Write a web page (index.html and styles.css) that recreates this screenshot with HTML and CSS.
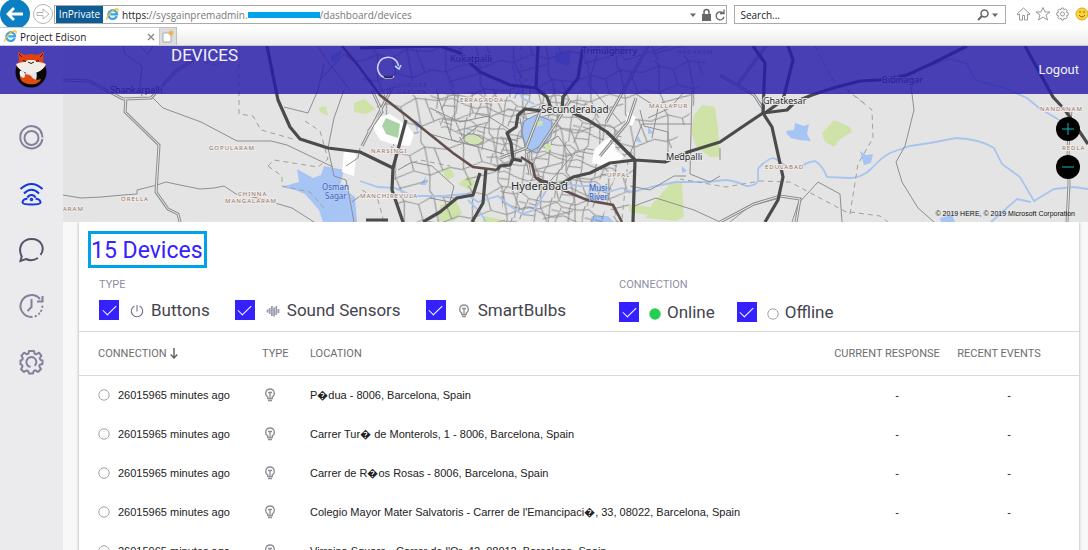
FILE: index.html
```html
<!DOCTYPE html>
<html lang="en">
<head>
<meta charset="utf-8">
<title>Project Edison</title>
<link rel="stylesheet" href="styles.css">
</head>
<body>
<svg class="defs" aria-hidden="true">
  <symbol id="ie" viewBox="0 0 14 14">
    <path d="M11.6 8.8a4.7 4.7 0 1 1 .3-2H4.6" fill="none" stroke="#35a3e6" stroke-width="2.4"/>
    <path d="M1.2 12.8C-.4 10.600 5.500 2.200 11 1c2.600-.5 2.500 1.500 1.600 3" fill="none" stroke="#efbb2b" stroke-width="1.3"/>
  </symbol>
  <symbol id="bulb" viewBox="0 0 12 14">
    <path d="M3.700 8.800C.7 7.400.9 1 6 1s5.300 6.400 2.300 7.800V10.500H3.700zM4 12.500h4M4 4.500h4M6 4.500v5" fill="none" stroke="#8d8d94" stroke-width="1.300"/>
  </symbol>
  <symbol id="ring" viewBox="0 0 12 12"><circle cx="6" cy="6" r="5.200" fill="#fff" stroke="#a3a3a6"/></symbol>
</svg>

<header class="browser">
  <div class="toolbar">
    <button class="back" aria-label="Back"><svg viewBox="0 0 30 30"><circle cx="15" cy="14" r="15" fill="#0b7fc1"/><path d="M23 14H9M14 8l-6 6 6 6" fill="none" stroke="#fff" stroke-width="2.800"/></svg></button>
    <button class="forward" aria-label="Forward"><svg viewBox="0 0 22 22"><circle cx="11" cy="11" r="9.500" fill="#fff" stroke="#b5b5b5"/><path d="M5 9.500h6V6l6 5-6 5v-3.500H5z" fill="#fff" stroke="#b5b5b5"/></svg></button>
    <div class="address">
      <span class="inprivate">InPrivate</span>
      <svg class="ie"><use href="#ie"/></svg>
      <span class="url"><b>https:</b>//sysgainpremadmin.</span><span class="stroke"></span><span class="url">/dashboard/devices</span>
      <svg class="addr-tools" viewBox="0 0 36 14"><path d="M0 5.500h6l-3 3.500z" fill="#666"/><path d="M12 6h9v7h-9z" fill="#666"/><path d="M14 6V4a2.500 2.500 0 0 1 5 0v2" fill="none" stroke="#666" stroke-width="1.500"/><path d="M33 5a4 4 0 1 0 1 4M34 1.500V5.500h-4" fill="none" stroke="#666" stroke-width="1.300"/></svg>
    </div>
    <form class="search">
      <input type="text" aria-label="Search" placeholder="Search...">
      <svg viewBox="0 0 24 14"><circle cx="7.500" cy="5.500" r="3.500" fill="none" stroke="#666" stroke-width="1.500"/><path d="M5 8l-4 4" stroke="#666" stroke-width="2"/><path d="M15 5.500h6l-3 3.500z" fill="#666"/></svg>
    </form>
    <svg class="tools" viewBox="0 0 72 16" fill="none" stroke="#999">
      <path d="M1 8l6.500-6L14 8l-1 1-1.500-1v6h-3V9.500h-2V14h-3V8L2 9z"/>
      <path d="M27 1.500l2 4.500h5l-4 3 1.500 5-4.500-3-4.500 3L24 9l-4-3h5z"/>
      <g><circle cx="46.500" cy="8" r="2"/><path d="M45.500 2h2l.5 1.800 1.800-.8 1.400 1.400-.8 1.800 1.800.6v2.400l-1.800.6.8 1.800-1.400 1.400-1.800-.8-.5 1.800h-2l-.5-1.800-1.800.8-1.400-1.400.8-1.800-1.800-.6V6.800l1.800-.6-.8-1.800L43.200 3l1.800.8z"/></g>
      <circle cx="66" cy="8" r="6" fill="#fbd43a" stroke="#dba91b"/><path d="M63 9q3 4 6 0M64 5v2M68 5v2" stroke="#8a6410"/>
    </svg>
  </div>
  <div class="tabs">
    <div class="tab"><svg class="ie"><use href="#ie"/></svg><span>Project Edison</span><button aria-label="Close tab"><svg viewBox="0 0 8 8"><path d="M1 1l6 6M7 1L1 7" stroke="#888" stroke-width="1.400"/></svg></button></div>
    <button class="newtab" aria-label="New tab"><svg viewBox="0 0 14 14"><path d="M2 3h8v9H2z" fill="#fff" stroke="#aaa"/><path d="M10 0v6M7 3h6M8 1l4 4M12 1L8 5" stroke="#f0ac3a"/></svg></button>
  </div>
</header>

<div class="app">
  <div class="topbar">
    <svg class="logo" viewBox="0 0 34 38">
      <circle cx="17" cy="22" r="15.500" fill="#080808"/>
      <path d="M12 30c-2-6 0-12 5-12s7 6 5 12z" fill="#e4e4e4"/>
      <path d="M6 24c-1 6 3 9 8 10 7 1 12-1 13-5-5 2-8 0-10-3-4-3-8 0-11-2z" fill="#df4a10"/>
      <path d="M6 21c3-1 7 2 4 7-4-1-5-4-4-7z" fill="#f2f2f2"/>
      <path d="M4 2l7 3q6-2 12 0l7-3-1 9 3 5q-7 7-15 7T2 16l3-5z" fill="#de4210"/>
      <path d="M2 14q5-2 8-2l4-2h6l4 2q3 0 8 2-3 6-8 8l-7 2-7-2Q5 20 2 14z" fill="#f1eeea"/>
      <path d="M5 4l3 3M29 4l-3 3M9 10.500l3 1M25 10.500l-3 1M14 12q3 3 6 0" stroke="#30140c" fill="none"/>
    </svg>
    <h1>DEVICES</h1>
    <svg class="spinner" viewBox="0 0 26 24" fill="none"><path d="M18 20.500A10.500 10.500 0 1 1 22.500 10" stroke="#d6d3ef" stroke-width="1.600"/><path d="M8 20.500q4.500 2.200 9 0" stroke="#26244a" stroke-width="1.500"/><path d="M19 10l4 3 2-4" stroke="#a8dcf4" stroke-width="1.600"/></svg>
    <a class="logout" href="#logout">Logout</a>
  </div>

  <nav class="sidebar">
    <a href="#status" aria-label="Status"><svg viewBox="0 0 24 24"><circle cx="12" cy="12" r="7"/><path d="M22.500 7.500a11.200 11.200 0 1 0 .5 5.500M21 5.500q2 3 2 6"/></svg></a>
    <a class="active" href="#devices" aria-label="Devices"><svg viewBox="0 0 24 24"><path d="M1 7Q12-3 23 7M4.500 11.500q7.500-7.500 15 0M8 15.500a4.500 4.500 0 0 1 8 0M8 16.500c-3 .5-5 2-5 4 0 1.500 3 2 9 2s9-.5 9-2c0-2-2-3.500-5-4"/><circle cx="12" cy="17.500" r=".8"/></svg></a>
    <a class="dark" href="#messages" aria-label="Messages"><svg viewBox="0 0 24 24"><path d="M2 18C-2 9 3 1 12 1c10 0 14 9 9 16M18.500 20c-4 2.500-9 2.500-12 1l-5.500 2 1.500-5.500"/></svg></a>
    <a href="#history" aria-label="History"><svg viewBox="0 0 24 24"><path d="M20.500 5A11 11 0 1 0 13 23M23 2v5.500h-5.500M12 5v8l-4 4"/><path d="M16 22.200l.5-.2M19.500 19.800l.3-.3M21.500 17l.3-.4M22.800 13v-.4" stroke-linecap="round"/></svg></a>
    <a href="#settings" aria-label="Settings"><svg viewBox="0 0 24 24"><path d="M9.500 1h5l.6 2.800q1 .8 2 .3l2.400-1.400 2.300 3-1.500 2.600q.2 1.400 1 1.700l1.700.5v3.500l-2.700.7q-.8.900-.3 2l1.500 2.400-3 2.800-2.600-1.600q-1.300.1-1.800 1l-.6 2.200h-4l-.6-2.200q-.8-.9-1.900-.9L4.500 22l-3-2.800L3 16.600q.1-1.300-.8-1.800L1 14.400v-4l1.500-.5q1-.7.7-1.900L1.900 5.600l2.700-2.900L7 4.100q1.300.2 1.900-.7z" stroke-linejoin="round"/><path d="M11 17a5 5 0 1 1 4.200-1.200"/></svg></a>
  </nav>

  <main class="content">
    <section class="map" aria-label="Map">
      <svg class="tiles" viewBox="63 46 1025 176" preserveAspectRatio="xMidYMid slice">
        <defs>
          <pattern id="streets" width="46" height="38" patternUnits="userSpaceOnUse" patternTransform="scale(1.5 1.3) rotate(-9)">
            <path d="M0 8l12-3 9 4 11-5 14 4M0 22l8 3 14-4 10 5 14-4M12 5l-3 19 3 14M21 9l1 12M32 4v22l-2 12M38 5l3 18M12 5L10 0M32 4l-2-4M9 33l21-3" fill="none" stroke="#909090" stroke-width=".7"/>
          </pattern>
          <pattern id="dense" width="34" height="29" patternUnits="userSpaceOnUse" patternTransform="rotate(14)">
            <path d="M0 6l10-3 8 4 16-1M0 18l12 1 9-4 13 3M5 5l3 24M17 7l-4 22M25 6l3 23M8 12h7M18 11l9 1M13 24l14-2M5 5l1-5M25 6l2-6" fill="none" stroke="#8a8a8a" stroke-width=".9"/>
          </pattern>
        </defs>
        <rect x="63" y="46" width="1025" height="176" fill="#e4e4e4"/>
        <g fill="#cfe3a9">
          <path d="M354 103l10-4 12 10-10 5-12-2zM694 115l8-10 13 2 3 20 2 30-10 0-14-11-5-14zM682 181l2 36-8 4-30-3 6-14 18-20zM822 133l12-13 16 7 2 5-12 7-6 8-9-5zM441 170l9-2 5 8-7 4zM440 205l16-4 6 12-8 8h-16zM318 108l8-2 2 10-8-4zM458 184l10-8 8 6-6 8zM484 216l20 4v2h-22zM628 204l22 3-2 8-18-3z"/>
        </g>
        <g fill="#a6c4f4">
          <path d="M281 187l18-5-2-13 16 9 8-3 3-9 20 4-4 16 7 5 8 6 2 25h-34l-4-12-14-16-10-4zM786 131l8-1 1-7 9 3 5-2-2 10 4 7-12-1-8-2-4-4zM860 151l6 4 7-1-2 9-7 2zM420 185l6-9-1 8 3-5-2 6zM414 120l6 2-3 10zM466 131l5 2-2 6zM648 127l6 6-6 1zM638 136l4 7-6-2zM682 166l5 5-5 2zM555 52h16l-2 14-14-4zM330 55l12-4-2 6-8 6zM592 216l16 0 6 6h-24zM940 218l12-3 3 7h-14z"/>
        </g>
        <path d="M430 94l140-6 52 46-6 40-14 48H504l-6-50-22-28-34-14z" fill="url(#dense)"/>
        <path d="M345 46h365l-16 60-22 42-36 12-10 62H400l-8-54-4-40z" fill="url(#streets)"/>
        <path d="M374 118l16-4 18 12 6 8-4 12-18-2-12-4-6-10zM594 150l10-10 9-3 3 14 8 5-7 8-11 2-14-3zM344 150l12 4-2 22-12-4zM628 112l8 5-4 9-7-3z" fill="#fdfdfd"/>
        <path d="M386 118l14 6-2 14-12-4-4-8z" fill="#a9d3a5"/>
        <path d="M464 136q10-6 20 4-8 10-20 1z" fill="#d1e2b4" stroke="#8a8a8a"/>
        <path d="M524 121l12-6 16 6-1 16-7 8-7 8-9-4-7-14z" fill="#a6c4f4" stroke="#7c93b9"/>
        <path d="M537 121h6l-1 5-3-1-2 3zM545 145l6-3v8l-6 1z" fill="#cfe3a9"/>
        <g fill="none" stroke="#a9c4ee" stroke-width="1.800">
          <path d="M360 181l18 6 16 1 20 8 30 0 22-2 12 8 20-6 12 10 12 8 12-4 14-22 18-4 14 2 14 0 14 6 14-4 10 4 24-6 20-4 30 0 20-2q10 1 20 6 10 0 12-5l0-12q7-9 15-11 8 3 15 10l10 1q8-7 17-8 8 5 12 16l23 1q12 0 22-10 10-11 18-15l20-7 20-3 26-5q24 1 38 10l8 16 18 13 14 24 20-12 20-2 14 2 14 12"/>
          <path d="M933 64l18-5 16 5 8 16 30 8 22 10 12 10 22 13M512 62l4 20 6 16 12 6M468 200l12 12 6 10M1031 202l-14-3-26 23"/>
        </g>
        <g fill="none" stroke="#8f8f8f">
          <path d="M63 195l18 3 20-1 22-2 14-1v-4l20-5 9-3 14 3 20 4 14-1 10-2 12 8 22 4 34 10 22 14M153 98l10 10 38 14 36 19 34 0 16 4 46 22M153 46l-5 8-8-8M123 46l2 8 17 12-2 20 2 10M318 90l-10 23-24-6M328 148l6-30 10-28M328 148l6 28 12 4 4 20 4 22M350 90l-22-28-10-16M320 80l24-26 16 12M324 64l-6 26M346 166l12-8 2-10M352 202l8-6"/>
          <path d="M692 90l-2 84 20 8 10-6M630 154l12-30 50 0M640 110l4 16 24 6v30M636 94l22 14-6 30M684 92l-14 16-22 10M630 186l20 4 24-14 12 0M634 206l22-8 38 12 26 12M792 222l6-18 20-22 22 12 2 28M910 78l4 32-9 36-9 16 6 20 16 26 16 14M720 148v12M780 198l-30 8-20 16"/>
          <path d="M520 115l24-4M520 118l6 36 32-18 14 20-26 30M430 108l30 14 28-6 22 14M436 90l16 50 52 14M430 134l28 8 20-16M600 46l-12 38 34 40M610 46l16 14 54-18M398 170l14-8 20 4 22 20-4 16-20-4"/>
        </g>
        <g fill="none" stroke="#8d8d8d" stroke-width="3"><path id="double" d="M63 80l26 1 34 18 28-1 24-26 30-20M126 98l-1 14 34 33-3 47 12 17 10 5 2 8M362 146l30-58M720 75l34 20 10 15M738 84l28-38M720 222l34-18 26-8 20 3-4 23M1071 110l-3 38 1 36-2 38M372 90l10 22-14 20M500 158l26-10 14-36M526 154l4 20M538 150l20-30 12-20M606 122l42-76M600 156l28-34 8-24"/></g>
        <g fill="none" stroke="#e9e9e9"><use href="#double"/></g>
        <g fill="none" stroke="#a0a0a0" stroke-dasharray="5 4">
          <path d="M195 60l24 6 20-20M239 46v68l14 2 8 14 32 9M268 166l6-6 44 7 10-8-8-28-18-12M268 166l14 10 0 10 28 6 14 16M848 90l24 20 1 28-15 26-8 50-60-32-30-1-34 6-46-8M815 46l18 34 32 24M850 212l30 4 8 6"/>
          <path d="M521 46v34h12M610 140l18 20-6 60M404 166l16-6 30 6M362 190l16 10 6 22"/>
        </g>
        <g fill="none" stroke="#4b4b4b" stroke-width="3.200" stroke-linejoin="round">
          <path d="M267 46l11 54 12 27 10 12 28 9 32 4 33 16M406 120l-13 48-1 22 11 32M360 48l80-2 20 7 20 19 30 13 26 3 11 9 5 14M538 46l-2 42M583 46l-5 32-15 19-1 12M573 113l15 7 19 12 28 28-25 3-20 10-17 4-13 8-18-4-5-3M635 160l-2 62M635 160l30 2 23-10 32-10 28-19 15-10 24-3 8-8 17-7 21-7 27-7 20-1 27-5 26-12 34-17"/>
          <path d="M753 46l12 17-2 50 9 14 11 50-5 23-13 22M788 46l5 14-10 40-18 13M1025 46l28 51 12 13 23 34M497 170l3-4 10-1 3-6 9 2M513 159l-2-16-4-10 9-6 2-12 7-6 17 2M486 168l-3 35-11 19M480 173l-7 22-16 3-17 14-17 10M366 220h22"/>
        </g>
        <path d="M342 46l18 22 20 27 27 21 46 37 20 14 24 3M521 157l11 7 3 13 5 4 23 9 24 10 26 5 9 17" fill="none" stroke="#62504e" stroke-width="2.600"/>
        <g class="town">
          <text x="110" y="93">Shankarpalli</text><text x="450" y="62">Kukatpalli</text><text x="582" y="54">Trimulgherry</text><text x="882" y="83">Bibinagar</text>
          <text x="763" y="104">Ghatkesar</text><text class="wide" x="541" y="113">Secunderabad</text><text x="666" y="160">Medpalli</text><text class="city" x="511" y="190">Hyderabad</text>
        </g>
        <g class="area">
          <text x="209" y="150">GOPULARAM</text><text x="121" y="201">ORELLA</text><text x="63" y="211">ARAM</text><text x="238" y="196">CHINNA</text><text x="225" y="203">MANGALARAM</text>
          <text x="371" y="153">NARSINGI</text><text x="360" y="198">MANCHIREVULA</text><text x="460" y="102">ERRAGADDA</text><text x="399" y="87">JUBILEE</text><text x="397" y="94">GARDEN</text>
          <text x="649" y="108">MALLAPUR</text><text x="607" y="177">UPPAL</text><text x="765" y="169">EDULABAD</text><text x="1040" y="111">NANDANAM</text><text x="1062" y="150">REDLA</text><text x="677" y="54">NAGARAM</text>
        </g>
        <g class="water"><text x="322" y="190">Osman</text><text x="325" y="199">Sagar</text><text x="589" y="191">Musi</text><text x="589" y="200">River</text></g>
      </svg>
      <div class="zoom">
        <button aria-label="Zoom in"><svg viewBox="0 0 24 24"><path d="M6 12h12M12 6v12"/></svg></button>
        <button aria-label="Zoom out"><svg viewBox="0 0 24 24"><path d="M6 12h12"/></svg></button>
      </div>
      <p class="copyright">© 2019 HERE, © 2019 Microsoft Corporation</p>
    </section>

    <section class="card">
      <h2>15 Devices</h2>
      <div class="filters">
        <fieldset>
          <legend>TYPE</legend>
          <div class="options">
            <label><input type="checkbox" checked><svg viewBox="0 0 14 14"><path d="M4.500 2a5.700 5.700 0 1 0 5 0M7 1v6.500" fill="none" stroke="#77748a" stroke-width="1.100"/></svg>Buttons</label>
            <label><input type="checkbox" checked><svg viewBox="0 0 14 14"><path d="M1.500 5.500v3M3.700 4v6M5.900 2v10M8.100 3.500v9M10.300 2v9M12.500 5v4" fill="none" stroke="#9a97ab" stroke-width="1.700"/></svg>Sound Sensors</label>
            <label><input type="checkbox" checked><svg><use href="#bulb"/></svg>SmartBulbs</label>
          </div>
        </fieldset>
        <fieldset class="status">
          <legend>CONNECTION</legend>
          <div class="options">
            <label><input type="checkbox" checked><svg viewBox="0 0 12 12"><circle cx="6" cy="6" r="5.700" fill="#25ce4e"/></svg>Online</label>
            <label><input type="checkbox" checked><svg><use href="#ring"/></svg>Offline</label>
          </div>
        </fieldset>
      </div>
      <table>
        <colgroup><col class="c-conn"><col class="c-type"><col><col class="c-resp"><col class="c-event"></colgroup>
        <thead>
          <tr><th>CONNECTION <svg class="sort" viewBox="0 0 8 11"><path d="M4 0v10M.7 6.500L4 10l3.300-3.500" fill="none" stroke="#666" stroke-width="1.500"/></svg></th><th>TYPE</th><th>LOCATION</th><th class="num">CURRENT RESPONSE</th><th class="num">RECENT EVENTS</th></tr>
        </thead>
        <tbody>
          <tr><td><svg class="dot"><use href="#ring"/></svg>26015965 minutes ago</td><td><svg class="bulb"><use href="#bulb"/></svg></td><td>P�dua - 8006, Barcelona, Spain</td><td class="num">-</td><td class="num">-</td></tr>
          <tr><td><svg class="dot"><use href="#ring"/></svg>26015965 minutes ago</td><td><svg class="bulb"><use href="#bulb"/></svg></td><td>Carrer Tur� de Monterols, 1 - 8006, Barcelona, Spain</td><td class="num">-</td><td class="num">-</td></tr>
          <tr><td><svg class="dot"><use href="#ring"/></svg>26015965 minutes ago</td><td><svg class="bulb"><use href="#bulb"/></svg></td><td>Carrer de R�os Rosas - 8006, Barcelona, Spain</td><td class="num">-</td><td class="num">-</td></tr>
          <tr><td><svg class="dot"><use href="#ring"/></svg>26015965 minutes ago</td><td><svg class="bulb"><use href="#bulb"/></svg></td><td>Colegio Mayor Mater Salvatoris - Carrer de l'Emancipaci�, 33, 08022, Barcelona, Spain</td><td class="num">-</td><td class="num">-</td></tr>
          <tr><td><svg class="dot"><use href="#ring"/></svg>26015965 minutes ago</td><td><svg class="bulb"><use href="#bulb"/></svg></td><td>Virreina Square - Carrer de l'Or, 42, 08012, Barcelona, Spain</td><td class="num">-</td><td class="num">-</td></tr>
        </tbody>
      </table>
    </section>
  </main>
</div>
</body>
</html>
```
FILE: styles.css
```css
* { box-sizing: border-box; }
body {
  margin: 0;
  height: 100vh;
  display: flex;
  flex-direction: column;
  overflow: hidden;
  background: #f8f8f8;
  font-family: Roboto, "Liberation Sans", sans-serif;
}
button { border: 0; padding: 0; background: none; }
svg { display: block; flex: none; }
.defs { position: absolute; width: 0; height: 0; }

/* Browser frame */
.browser { font: 10px "Open Sans", "Noto Sans", sans-serif; color: #222; background: #fff; }
.toolbar { display: flex; align-items: center; height: 27px; overflow: hidden; }
.back, .back svg { width: 30px; height: 30px; }
.back { margin-top: 3px; }
.forward { margin-left: 2px; }
.forward svg { width: 22px; height: 22px; }
.address {
  flex: 674;
  display: flex;
  align-items: center;
  height: 19px;
  margin-top: 2px;
  padding-left: 1px;
  border: 1px solid #a9a9a9;
  background: #fff;
}
.inprivate { width: 47px; height: 17px; line-height: 16px; text-align: center; color: #fff; background: #0d5c94; }
.ie { width: 13px; height: 13px; margin: 0 3px; }
.url { color: #777; }
.url b { color: #222; font-weight: 400; }
.stroke { width: 72px; height: 6px; background: #00a2e8; }
.addr-tools { width: 36px; height: 14px; margin: 0 0 0 auto; }
.search {
  flex: 262;
  display: flex;
  align-items: center;
  height: 19px;
  margin: 2px 0 0 7px;
  padding: 0 4px 0 5px;
  border: 1px solid #a9a9a9;
}
.search input { flex: 1; min-width: 0; border: 0; padding: 0; font: inherit; }
.search input::placeholder { color: #222; }
.search svg { width: 24px; height: 14px; }
.tools { width: 72px; height: 16px; margin-left: 10px; }
.tabs { display: flex; height: 19px; background: linear-gradient(#fff, #ebebeb); border-bottom: 1px solid #c8c8c8; }
.tab { display: flex; align-items: center; width: 160px; padding: 0 4px 0 1px; background: #fff; border: 1px solid #c8c8c8; border-width: 1px 1px 0 0; }
.tab button { margin-left: auto; }
.tab button svg { width: 8px; height: 8px; }
.newtab { width: 17px; background: #ddd; border: 1px solid #c0c0c0; border-width: 1px 1px 0 0; }
.newtab svg { width: 14px; height: 14px; margin: auto; }

/* Application */
.app { position: relative; flex: 1; min-height: 0; display: grid; grid-template-columns: 63px 1fr; }
.topbar {
  position: absolute;
  z-index: 1;
  inset: 0 0 auto;
  display: flex;
  height: 48px;
  padding: 0 9px 0 14px;
  background: rgba(40, 29, 169, .83);
  color: #f1f0fb;
}
.logo { width: 34px; height: 38px; margin-top: 4px; }
.topbar h1 { margin: 0 0 0 123px; font-size: 17px; line-height: 19px; font-weight: 400; }
.spinner { width: 26px; height: 24px; margin: 10px 0 0 138px; }
.logout { margin-left: auto; color: #f1f0fb; font-size: 13px; line-height: 47px; text-decoration: none; }
.sidebar { display: flex; flex-direction: column; align-items: center; gap: 32px; padding-top: 80px; background: #ebebed; }
.sidebar svg { width: 25px; height: 24px; fill: none; stroke: #84809c; stroke-width: 2; overflow: visible; }
.sidebar .active svg { stroke: #1038e0; }
.sidebar .dark svg { stroke: #55536b; }
.content { min-width: 0; }

/* Map */
.map { position: relative; height: 176px; }
.tiles { width: 100%; height: 100%; font-family: "Noto Sans", sans-serif; }
.town { font-size: 9px; fill: #2d2d2d; paint-order: stroke; stroke: #e9e9e9; stroke-width: 2px; }
.town .wide { font-size: 10px; }
.city { font-size: 11px; }
.area { font-size: 6px; letter-spacing: 1px; fill: #8f776c; paint-order: stroke; stroke: #f0ebe8; stroke-width: 2px; }
.water { font-size: 8px; fill: #3d5fb5; paint-order: stroke; stroke: #b9cff4; stroke-width: 1px; }
.zoom { position: absolute; top: 71px; right: 8px; display: grid; gap: 14px; }
.zoom button { border-radius: 50%; background: #000; }
.zoom svg { width: 24px; height: 24px; stroke: #12b5c4; }
.copyright { position: absolute; right: 13px; bottom: 3px; margin: 0; font: 7px/10px "Liberation Sans", sans-serif; color: #111; }

/* Devices card */
.card { margin: 0 9px 0 16px; padding-top: 9px; background: #fff; box-shadow: 0 0 3px rgba(0, 0, 0, .35); }
.card h2 {
  width: max-content;
  margin: 0 0 10px 9px;
  padding: 3px 1px 0 0;
  border: 3px solid #00a2e8;
  color: #3520ff;
  font-size: 23px;
  line-height: 28px;
  font-weight: 400;
}
.filters { display: grid; grid-template-columns: 26fr 23fr; padding-left: 20px; height: 54px; border-bottom: 1px solid #d8d8d8; }
fieldset { min-width: 0; margin: 0; padding: 0; border: 0; }
legend { padding: 0; font-size: 11px; line-height: 13px; color: #908da5; }
.options { display: flex; gap: 25px; margin-top: 9px; }
.options label { display: flex; align-items: center; height: 20px; font-size: 17px; color: #44434f; white-space: nowrap; }
.options svg { width: 14px; height: 14px; margin: 2px 7px 0 11px; }
.status .options { gap: 22px; }
.status label { height: 24px; }
.status svg { width: 12px; height: 12px; margin: 4px 6px 0 10px; }
input[type="checkbox"] { appearance: none; width: 20px; height: 20px; margin: 0; background: #3520ff; display: grid; place-items: center; }
input[type="checkbox"]::before { content: ""; width: 6px; height: 12px; margin-bottom: 4px; border: solid #fff; border-width: 0 1px 1px 0; transform: rotate(45deg); }

table { width: 100%; border-collapse: collapse; table-layout: fixed; font: 11px "Liberation Sans", sans-serif; color: #222; }
.c-conn { width: 183px; }
.c-type { width: 48px; }
.c-resp { width: 112px; }
.c-event { width: 136px; }
th { height: 43px; padding: 0; border-bottom: 1px solid #d8d8d8; text-align: left; font: 11px Roboto, sans-serif; color: #6d6d6d; white-space: nowrap; }
td { height: 39px; padding: 0; white-space: nowrap; }
th:first-child, td:first-child { padding-left: 19px; }
.num { text-align: center; }
td.num { padding-left: 20px; }
th:last-child, td:last-child { padding-right: 24px; }
.sort { display: inline-block; width: 8px; height: 11px; margin-left: 1px; vertical-align: -2px; }
.dot { display: inline-block; width: 12px; height: 12px; margin: 0 8px 0 0; vertical-align: -2px; }
.bulb { width: 12px; height: 14px; margin-left: 2px; }
```
